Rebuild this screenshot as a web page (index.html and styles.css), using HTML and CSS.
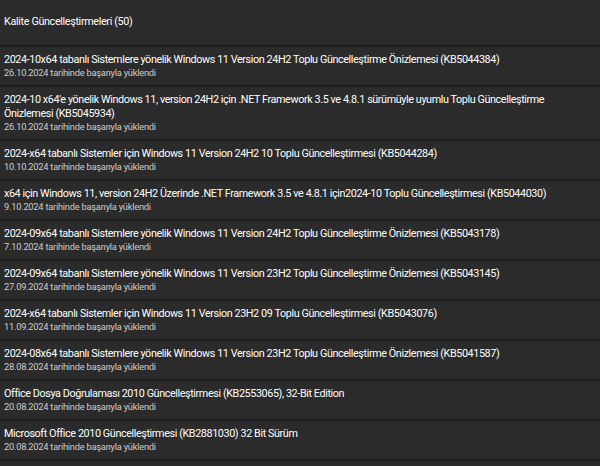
FILE: index.html
```html
<!DOCTYPE html>
<html lang="tr">
<head>
<meta charset="utf-8">
<link rel="stylesheet" href="styles.css">
</head>
<body>
<div class="panel">
  <div class="header">Kalite Güncelleştirmeleri (50)</div>
  <ul class="list">
    <li class="item"><div class="title">2024-10x64 tabanlı Sistemlere yönelik Windows 11 Version 24H2 Toplu Güncelleştirme Önizlemesi (KB5044384)</div><div class="date">26.10.2024 tarihinde başarıyla yüklendi</div></li>
    <li class="item"><div class="title">2024-10 x64'e yönelik Windows 11, version 24H2 için .NET Framework 3.5 ve 4.8.1 sürümüyle uyumlu Toplu Güncelleştirme Önizlemesi (KB5045934)</div><div class="date">26.10.2024 tarihinde başarıyla yüklendi</div></li>
    <li class="item"><div class="title">2024-x64 tabanlı Sistemler için Windows 11 Version 24H2 10 Toplu Güncelleştirmesi (KB5044284)</div><div class="date">10.10.2024 tarihinde başarıyla yüklendi</div></li>
    <li class="item"><div class="title">x64 için Windows 11, version 24H2 Üzerinde .NET Framework 3.5 ve 4.8.1 için2024-10 Toplu Güncelleştirmesi (KB5044030)</div><div class="date">9.10.2024 tarihinde başarıyla yüklendi</div></li>
    <li class="item"><div class="title">2024-09x64 tabanlı Sistemlere yönelik Windows 11 Version 24H2 Toplu Güncelleştirme Önizlemesi (KB5043178)</div><div class="date">7.10.2024 tarihinde başarıyla yüklendi</div></li>
    <li class="item"><div class="title">2024-09x64 tabanlı Sistemlere yönelik Windows 11 Version 23H2 Toplu Güncelleştirme Önizlemesi (KB5043145)</div><div class="date">27.09.2024 tarihinde başarıyla yüklendi</div></li>
    <li class="item"><div class="title">2024-x64 tabanlı Sistemler için Windows 11 Version 23H2 09 Toplu Güncelleştirmesi (KB5043076)</div><div class="date">11.09.2024 tarihinde başarıyla yüklendi</div></li>
    <li class="item"><div class="title">2024-08x64 tabanlı Sistemlere yönelik Windows 11 Version 23H2 Toplu Güncelleştirme Önizlemesi (KB5041587)</div><div class="date">28.08.2024 tarihinde başarıyla yüklendi</div></li>
    <li class="item"><div class="title">Office Dosya Doğrulaması 2010 Güncelleştirmesi (KB2553065), 32-Bit Edition</div><div class="date">20.08.2024 tarihinde başarıyla yüklendi</div></li>
    <li class="item"><div class="title">Microsoft Office 2010 Güncelleştirmesi (KB2881030) 32 Bit Sürüm</div><div class="date">20.08.2024 tarihinde başarıyla yüklendi</div></li>
    <li class="item item-empty"></li>
  </ul>
</div>
</body>
</html>
```

FILE: styles.css
```css
html, body {
  margin: 0;
  padding: 0;
  background: #2b2b2b;
  overflow: hidden;
}
body {
  width: 600px;
  height: 466px;
  font-family: Roboto, "Noto Sans", sans-serif;
  color: #ffffff;
}
.panel {
  display: flex;
  flex-direction: column;
}
.header {
  height: 45px;
  display: flex;
  align-items: center;
  padding: 0 0 3px 4px;
  box-sizing: border-box;
  font-size: 10.8px;
  letter-spacing: -0.35px;
}
.list {
  list-style: none;
  margin: 0;
  padding: 0;
}
.item {
  border-top: 2px solid #1e1e1e;
  padding: 6px 36px 6px 4px;
}
.item-empty {
  height: 26px;
}
.title {
  font-size: 10.8px;
  letter-spacing: -0.4px;
  line-height: 14px;
  color: #ffffff;
}
.date {
  font-size: 9.3px;
  letter-spacing: -0.24px;
  line-height: 12px;
  color: #cccccc;
}
```
